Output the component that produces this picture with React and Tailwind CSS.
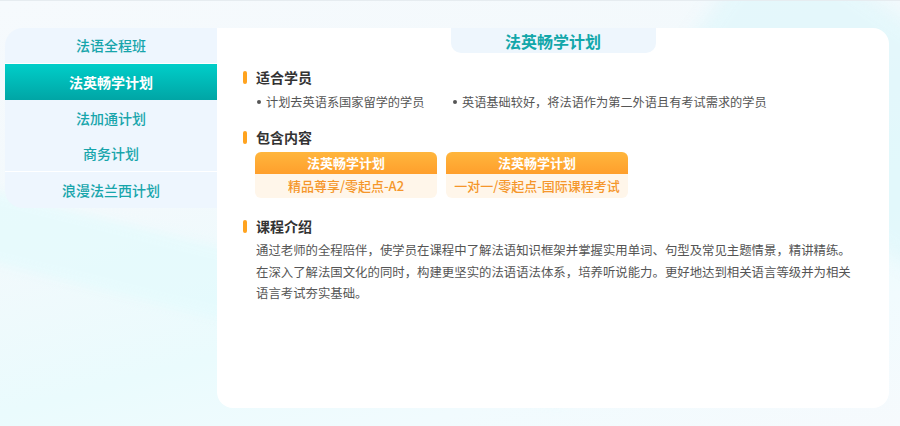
import React from "react";

const MENU = ["法语全程班", "法英畅学计划", "法加通计划", "商务计划", "浪漫法兰西计划"];

const CARDS = [
  { title: "法英畅学计划", desc: "精品尊享/零起点-A2" },
  { title: "法英畅学计划", desc: "一对一/零起点-国际课程考试" },
];

function Heading({ children, className = "" }) {
  return (
    <div className={`flex items-center gap-[9px] ${className}`}>
      <span className="w-[4px] h-[13px] rounded-full bg-[#ffa31f]" />
      <span className="text-[14px] leading-[18px] font-bold text-[#333]">{children}</span>
    </div>
  );
}

function Bullet({ children, className = "" }) {
  return (
    <div className={`flex items-center ${className}`}>
      <span className="w-[4px] h-[4px] rounded-full bg-[#555] mr-[5px]" />
      <span>{children}</span>
    </div>
  );
}

export default function App() {
  const active = 1;
  return (
    <div
      className="relative w-[900px] h-[426px] overflow-hidden border-t border-[#e6ecf0] bg-[linear-gradient(165deg,#f6fafd_0%,#f3f9fc_35%,#eafbfd_62%,#f1fbfe_80%,#f6fafd_100%)]"
      style={{ fontFamily: '"Noto Sans CJK SC", "Noto Sans", sans-serif' }}
    >
      <div className="absolute -left-[120px] top-[250px] w-[700px] h-[70px] rotate-[14deg] bg-[#e3fbfd] opacity-70 blur-[6px]" />
      <div className="absolute right-[-140px] top-[10px] w-[360px] h-[200px] rotate-[35deg] bg-[#dff7fb] opacity-70 blur-[10px]" />

      <div className="relative flex pt-[26px] pl-[5px]">
        {/* sidebar */}
        <div className="w-[212px] mt-[1px] self-start rounded-l-[18px] overflow-hidden bg-[#eef6fe]">
          {MENU.map((m, i) => (
            <div
              key={m}
              className={`h-[36px] flex items-center justify-center text-[14px] ${
                i === active
                  ? "bg-[linear-gradient(180deg,#00cec9,#00a5a5)] text-white font-bold"
                  : "text-[#17a5ab] font-medium"
              } ${i === 0 || i === 3 ? "border-b border-white" : ""}`}
            >
              {m}
            </div>
          ))}
        </div>

        {/* main panel */}
        <div className="w-[672px] h-[380px] mt-[1px] bg-white rounded-r-[16px] rounded-bl-[16px]">
          <div className="flex justify-center">
            <div className="w-[205px] h-[25px] rounded-b-[10px] bg-[#eef6fd] flex items-center justify-center text-[16px] font-bold text-[#12a7aa]">
              法英畅学计划
            </div>
          </div>

          <div className="pl-[26px]">
            <Heading className="mt-[15px]">适合学员</Heading>
            <div className="flex mt-[7px] ml-[14px] text-[12.2px] leading-[18px] text-[#555]">
              <Bullet className="w-[196px]">计划去英语系国家留学的学员</Bullet>
              <Bullet>英语基础较好，将法语作为第二外语且有考试需求的学员</Bullet>
            </div>

            <Heading className="mt-[17px]">包含内容</Heading>
            <div className="flex gap-[9px] mt-[6px] ml-[12px]">
              {CARDS.map((c, i) => (
                <div key={i} className="w-[182px] rounded-[6px] overflow-hidden">
                  <div className="h-[22px] flex items-center justify-center text-[13px] font-bold text-white bg-[linear-gradient(180deg,#ffb63d,#ff9f2c)]">
                    {c.title}
                  </div>
                  <div className="h-[24px] flex items-center justify-center text-[13px] font-medium text-[#f5962b] bg-[#fff6ea]">
                    {c.desc}
                  </div>
                </div>
              ))}
            </div>

            <Heading className="mt-[19px]">课程介绍</Heading>
            <div className="mt-[5px] ml-[13px] text-[12.4px] leading-[21.5px] text-[#555] whitespace-nowrap">
              <div>通过老师的全程陪伴，使学员在课程中了解法语知识框架并掌握实用单词、句型及常见主题情景，精讲精练。</div>
              <div>在深入了解法国文化的同时，构建更坚实的法语语法体系，培养听说能力。更好地达到相关语言等级并为相关</div>
              <div>语言考试夯实基础。</div>
            </div>
          </div>
        </div>
      </div>
    </div>
  );
}
